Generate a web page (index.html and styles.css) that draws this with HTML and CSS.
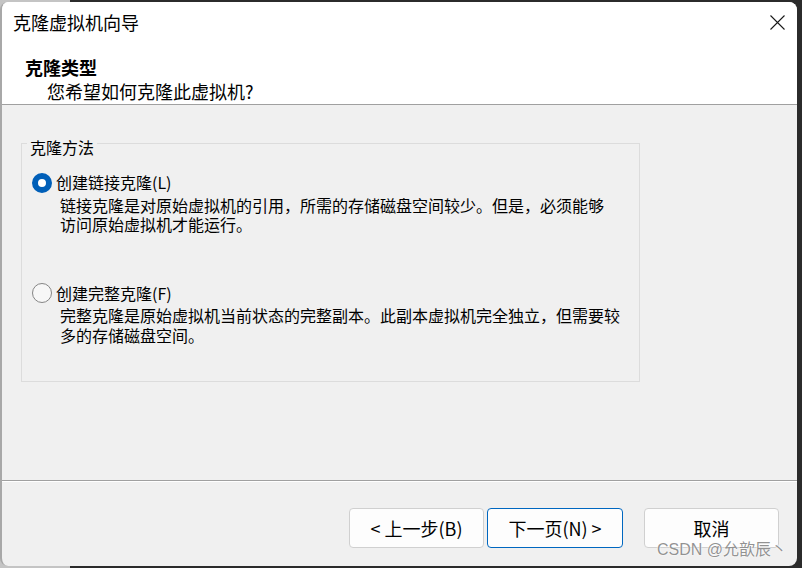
FILE: index.html
```html
<!DOCTYPE html>
<html lang="zh-CN">
<head>
<meta charset="utf-8">
<title>克隆虚拟机向导</title>
<link rel="stylesheet" href="styles.css">
</head>
<body>
<div class="window">
  <div class="top">
    <div class="titlebar">
      <span class="title">克隆虚拟机向导</span>
      <svg class="close" width="15" height="15" viewBox="0 0 15 15"><path d="M0.5 0.5 L14.5 14.5 M14.5 0.5 L0.5 14.5" stroke="#1a1a1a" stroke-width="1.1" fill="none"/></svg>
    </div>
    <div class="heading">克隆类型</div>
    <div class="subheading">您希望如何克隆此虚拟机?</div>
  </div>
  <div class="main">
    <div class="group">
      <div class="group-title">克隆方法</div>
      <div class="option first">
        <div class="radio-row">
          <span class="radio checked"></span>
          <span class="label">创建链接克隆(L)</span>
        </div>
        <div class="desc"><div class="line">链接克隆是对原始虚拟机的引用，所需的存储磁盘空间较少。但是，必须能够</div><div class="line">访问原始虚拟机才能运行。</div></div>
      </div>
      <div class="option second">
        <div class="radio-row">
          <span class="radio"></span>
          <span class="label">创建完整克隆(F)</span>
        </div>
        <div class="desc"><div class="line">完整克隆是原始虚拟机当前状态的完整副本。此副本虚拟机完全独立，但需要较</div><div class="line">多的存储磁盘空间。</div></div>
      </div>
    </div>
  </div>
  <div class="footer">
    <button class="btn">&lt; 上一步(B)</button>
    <button class="btn primary">下一页(N) &gt;</button>
    <button class="btn cancel">取消</button>
  </div>
  <div class="watermark">CSDN @允歆辰丶</div>
</div>
</body>
</html>
```

FILE: styles.css
```css
html, body {
  margin: 0;
  padding: 0;
}
body {
  width: 802px;
  height: 568px;
  overflow: hidden;
  background: linear-gradient(to right, #c4c4c4 0, #c4c4c4 70px, #2b2b2b 70px);
  font-family: "Noto Sans CJK SC", "Microsoft YaHei", sans-serif;
  color: #000;
}
.window {
  position: relative;
  box-sizing: border-box;
  width: 797px;
  height: 564px;
  margin-top: 2px;
  background: #f0f0f0;
  border-left: 2px solid #a8a8a8;
  border-radius: 8px;
  overflow: hidden;
  display: flex;
  flex-direction: column;
}
.top {
  background: #fff;
  border-bottom: 1px solid #a0a0a0;
  padding: 8px 0 1px 0;
}
.titlebar {
  display: flex;
  align-items: center;
  justify-content: space-between;
  padding-left: 11px;
  padding-right: 12px;
  height: 24px;
}
.title {
  font-size: 18px;
  line-height: 24px;
}
.close {
  display: block;
}
.heading {
  margin-top: 21px;
  padding-left: 23px;
  font-size: 18px;
  font-weight: bold;
  line-height: 24px;
}
.subheading {
  padding-left: 45px;
  font-size: 18px;
  line-height: 24px;
}
.main {
  flex: 1;
  padding: 38px 0 0 19px;
}
.group {
  box-sizing: border-box;
  width: 619px;
  height: 239px;
  border: 1px solid #dcdcdc;
  padding: 0 0 0 10px;
}
.group-title {
  width: fit-content;
  margin: -6px 0 0 -5px;
  padding: 0 3px;
  background: #f0f0f0;
  font-size: 16px;
  line-height: 18px;
}
.option.first {
  margin-top: 16.5px;
}
.option.second {
  margin-top: 48.5px;
}
.radio-row {
  display: flex;
  align-items: center;
  height: 20px;
}
.radio {
  box-sizing: border-box;
  width: 20px;
  height: 20px;
  border-radius: 50%;
  border: 1px solid #858585;
  background: #f7f7f7;
  flex: none;
}
.radio.checked {
  border: 6.5px solid #005fb8;
  background: #fff;
}
.label {
  margin-left: 4px;
  font-size: 16px;
  line-height: 19px;
}
.desc {
  margin-top: 3px;
  padding-left: 28px;
  font-size: 16px;
}
.line {
  height: 19.5px;
  line-height: 19.5px;
}
.footer {
  height: 86px;
  box-sizing: border-box;
  border-top: 1px solid #a0a0a0;
  box-shadow: inset 0 1px 0 #ffffff;
  display: flex;
  justify-content: flex-end;
  align-items: flex-start;
  padding: 27px 18px 0 0;
}
.btn {
  box-sizing: border-box;
  width: 135px;
  height: 40px;
  background: #fdfdfd;
  border: 1px solid #d0d0d0;
  border-radius: 4px;
  font-family: "Noto Sans CJK SC", "Microsoft YaHei", sans-serif;
  font-size: 18px;
  line-height: 22px;
  color: #000;
  padding: 0;
}
.btn.primary {
  width: 136px;
  margin-left: 3px;
  border-color: #0067c0;
}
.btn.cancel {
  margin-left: 21px;
}
.watermark {
  position: absolute;
  right: 10px;
  bottom: 7px;
  font-family: "Liberation Sans", "Noto Sans CJK SC", sans-serif;
  font-size: 16px;
  line-height: 18px;
  color: rgba(110, 110, 110, 0.75);
  text-shadow: 0 0 1px #fff, 0 0 2px #fff;
}
```
